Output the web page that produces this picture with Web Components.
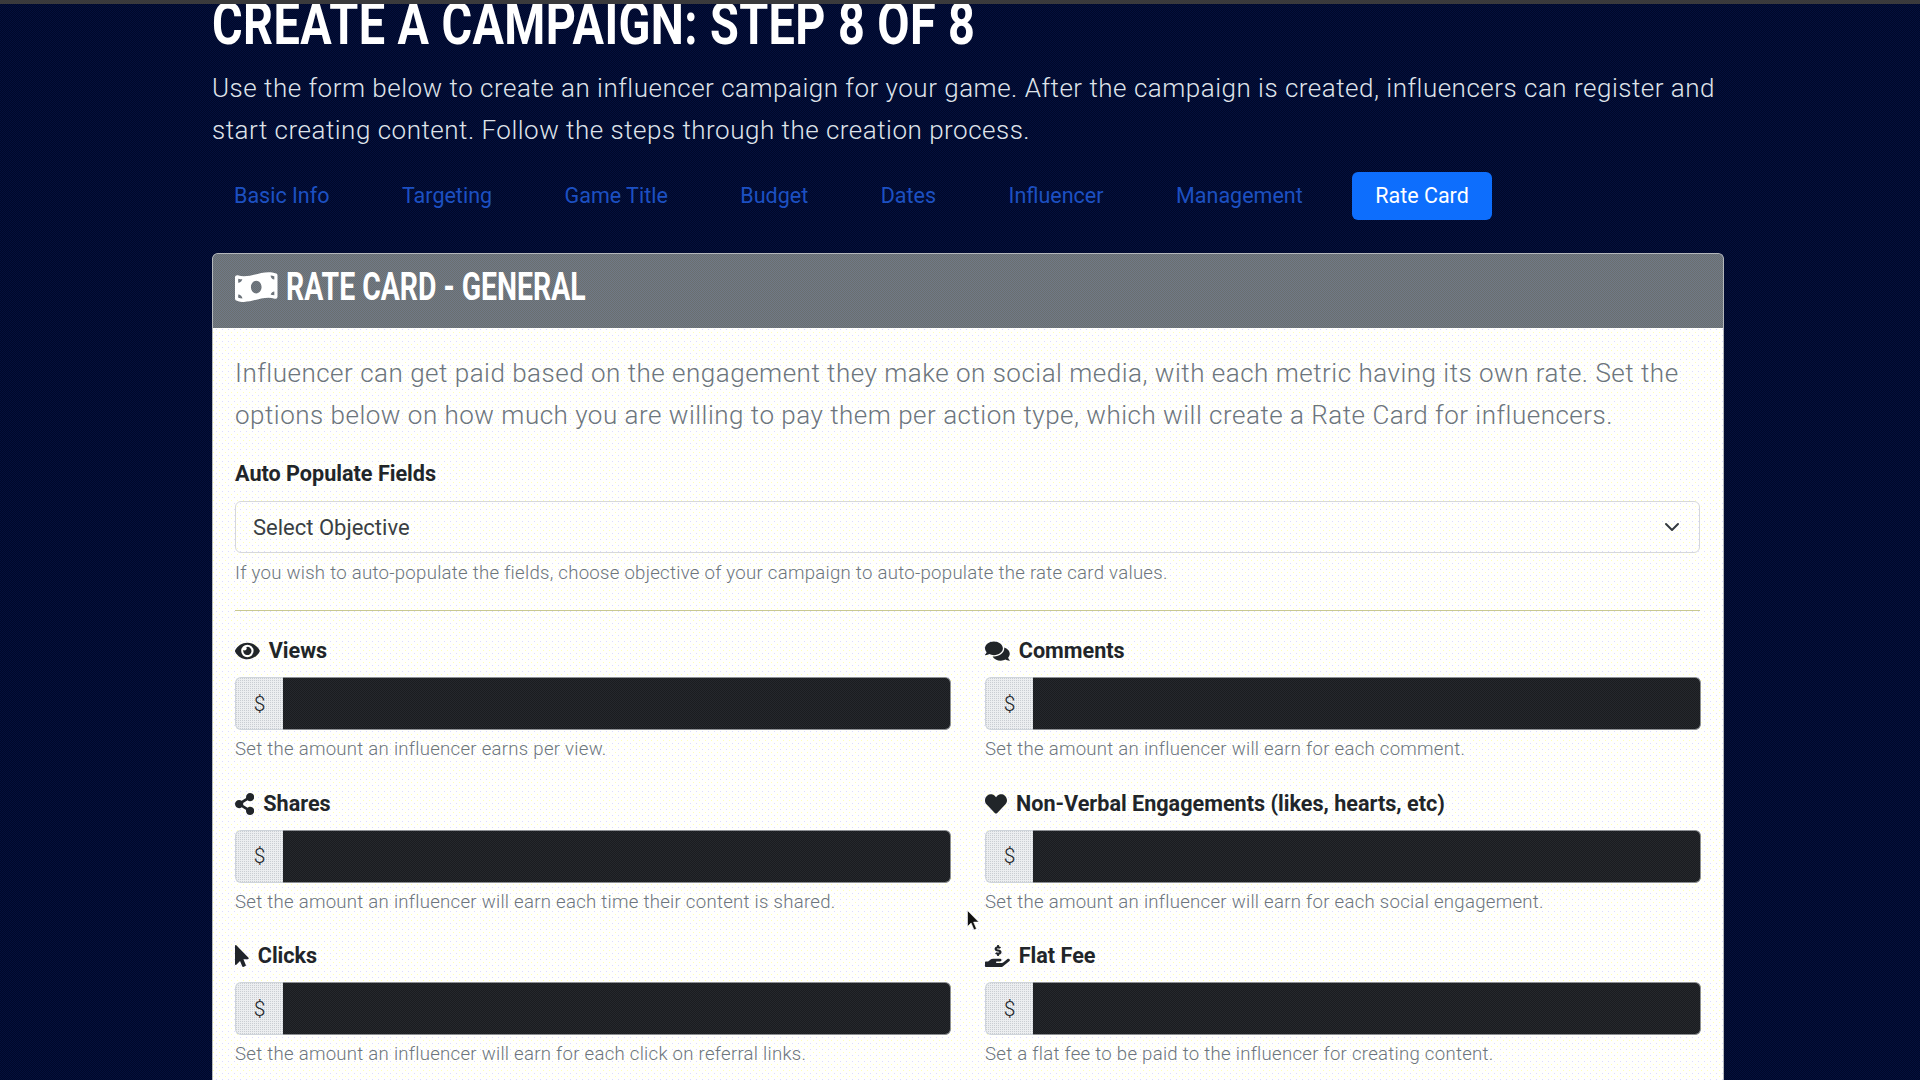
<!DOCTYPE html>
<html lang="en"><head><meta charset="utf-8"><title>Create a Campaign</title>
<style>
html,body{margin:0;height:1080px;overflow:hidden;background:#010a30}
body{font-family:Roboto,"Liberation Sans",sans-serif}
</style></head><body>
<campaign-page>
  <page-intro>
    <cond-title size="59" sx="0.794" lh="48" slot="t">CREATE A CAMPAIGN: STEP 8 OF 8</cond-title>
    Use the form below to create an influencer campaign for your game. After the campaign is created, influencers can register and start creating content. Follow the steps through the creation process.
  </page-intro>
  <step-tabs>
    <step-tab>Basic Info</step-tab><step-tab>Targeting</step-tab><step-tab>Game Title</step-tab><step-tab>Budget</step-tab><step-tab>Dates</step-tab><step-tab>Influencer</step-tab><step-tab>Management</step-tab><step-tab active>Rate Card</step-tab>
  </step-tabs>
  <rate-card>
    <fa-icon slot="icon" name="money" size="34" vb="640"></fa-icon>
    <cond-title slot="title" size="38" sx="0.747" lh="46">RATE CARD - GENERAL</cond-title>
    <select-field label="Auto Populate Fields" value="Select Objective" help="If you wish to auto-populate the fields, choose objective of your campaign to auto-populate the rate card values."></select-field>
    <rate-grid>
      <rate-field label="Views" icon="eye" help="Set the amount an influencer earns per view."></rate-field>
      <rate-field label="Comments" icon="comments" help="Set the amount an influencer will earn for each comment."></rate-field>
      <rate-field label="Shares" icon="share" help="Set the amount an influencer will earn each time their content is shared."></rate-field>
      <rate-field label="Non-Verbal Engagements (likes, hearts, etc)" icon="heart" help="Set the amount an influencer will earn for each social engagement."></rate-field>
      <rate-field label="Clicks" icon="pointer" help="Set the amount an influencer will earn for each click on referral links."></rate-field>
      <rate-field label="Flat Fee" icon="hand" help="Set a flat fee to be paid to the influencer for creating content."></rate-field>
    </rate-grid>
  </rate-card>
  <screen-cursor></screen-cursor>
</campaign-page>
<script>
const ICONS={
money:[640,"M621.16 54.46C582.37 38.19 543.55 32 504.75 32c-123.17-.01-246.33 62.34-369.5 62.34-30.89 0-61.76-3.92-92.65-13.72-3.47-1.1-6.95-1.62-10.35-1.62C15.04 79 0 92.32 0 110.81v317.26c0 12.63 7.23 24.6 18.84 29.46C57.63 473.81 96.45 480 135.25 480c123.17 0 246.34-62.35 369.51-62.35 30.89 0 61.76 3.92 92.65 13.72 3.47 1.1 6.95 1.62 10.35 1.62 17.21 0 32.25-13.32 32.25-31.81V83.93c-.01-12.64-7.24-24.6-18.85-29.47zM48 132.22c20.12 5.04 41.12 7.57 62.72 8.93C104.84 170.54 79 192.69 48 192.69v-60.47zm0 285v-47.78c34.37 0 62.18 27.27 63.71 61.4-22.53-1.81-43.59-6.31-63.71-13.62zM320 352c-44.19 0-80-42.99-80-96 0-53.02 35.82-96 80-96s80 42.98 80 96c0 53.03-35.83 96-80 96zm272 27.78c-17.52-4.39-35.71-6.85-54.32-8.44 5.87-26.08 27.5-45.88 54.32-49.28v57.72zm0-236.11c-30.89-3.91-54.86-29.7-55.81-61.55 19.54 2.17 38.09 6.23 55.81 12.66v48.89z"],
eye:[576,"M572.52 241.4C518.29 135.59 410.93 64 288 64S57.68 135.64 3.48 241.41a32.35 32.35 0 0 0 0 29.19C57.71 376.41 165.07 448 288 448s230.32-71.64 284.52-177.41a32.35 32.35 0 0 0 0-29.19zM288 400a144 144 0 1 1 144-144 143.93 143.93 0 0 1-144 144zm0-240a95.31 95.31 0 0 0-25.31 3.79 47.85 47.85 0 0 1-66.9 66.9A95.78 95.78 0 1 0 288 160z"],
comments:[576,"M416 192c0-88.4-93.1-160-208-160S0 103.6 0 192c0 34.3 14.1 65.9 38 92-13.4 30.2-35.5 54.2-35.8 54.5-2.2 2.3-2.8 5.7-1.5 8.7S4.8 352 8 352c36.6 0 66.9-12.3 88.7-25 32.2 15.7 70.3 25 111.3 25 114.9 0 208-71.6 208-160zm122 220c23.9-26 38-57.7 38-92 0-66.9-53.5-124.2-129.3-148.1.9 6.6 1.3 13.3 1.3 20.1 0 105.9-107.7 192-240 192-10.8 0-21.3-.8-31.7-1.9C207.8 439.6 281.8 480 368 480c41 0 79.1-9.2 111.3-25 21.8 12.7 52.1 25 88.7 25 3.2 0 6.1-1.9 7.3-4.8 1.3-2.9.7-6.3-1.5-8.7-.3-.3-22.4-24.2-35.8-54.5z"],
share:[448,"M352 320c-22.608 0-43.387 7.819-59.79 20.895l-102.486-64.054a96.551 96.551 0 0 0 0-41.683l102.486-64.054C308.613 184.181 329.392 192 352 192c53.019 0 96-42.981 96-96S405.019 0 352 0s-96 42.981-96 96c0 7.158.79 14.13 2.276 20.841L155.79 180.895C139.387 167.819 118.608 160 96 160c-53.019 0-96 42.981-96 96s42.981 96 96 96c22.608 0 43.387-7.819 59.79-20.895l102.486 64.054A96.301 96.301 0 0 0 256 416c0 53.019 42.981 96 96 96s96-42.981 96-96-42.981-96-96-96z"],
heart:[512,"M462.3 62.6C407.5 15.9 326 24.3 275.7 76.2L256 96.5l-19.7-20.3C186.1 24.3 104.5 15.9 49.7 62.6c-62.8 53.6-66.1 149.8-9.9 207.9l193.5 199.8c12.5 12.9 32.8 12.9 45.3 0l193.5-199.8c56.3-58.1 53-154.3-9.8-207.9z"],
pointer:[320,"M302.189 329.126H196.105l55.831 135.993c3.889 9.428-.555 19.999-9.444 23.999l-49.165 21.427c-9.165 4-19.443-.571-23.332-9.714l-53.053-129.136-86.664 89.138C18.729 472.71 0 463.554 0 447.977V18.299C0 1.899 19.921-6.096 30.277 5.443l284.412 292.542c11.472 11.179 3.007 31.141-12.5 31.141z"],
hand:[576,"M271.06,144.3l54.27,14.3a8.59,8.59,0,0,1,6.63,8.1c0,4.6-4.09,8.4-9.12,8.4h-35.6a30,30,0,0,1-11.19-2.2c-5.24-2.2-11.28-1.7-15.3,2l-19,17.5a11.68,11.68,0,0,0-2.25,2.66,11.42,11.42,0,0,0,3.88,15.74,83.77,83.77,0,0,0,34.51,11.5V240c0,8.8,7.83,16,17.37,16h17.37c9.55,0,17.38-7.2,17.38-16V221.9c32.93-3.6,57.84-31,53.5-63-3.15-23-22.46-41.3-46.56-47.7L282.68,97.4a8.59,8.59,0,0,1-6.63-8.1c0-4.6,4.09-8.4,9.12-8.4h35.6A30,30,0,0,1,332,83.1c5.23,2.2,11.28,1.7,15.3-2l19-17.5A11.31,11.31,0,0,0,368.47,61a11.43,11.43,0,0,0-3.84-15.78,83.82,83.82,0,0,0-34.52-11.5V16c0-8.8-7.82-16-17.37-16H295.37C285.82,0,278,7.2,278,16V34.1c-32.89,3.6-57.85,31-53.51,63C227.63,120.1,247,138.4,271.06,144.3ZM565.27,328.1c-11.8-10.7-30.2-10-42.6,0L430.27,402a63.64,63.64,0,0,1-40,14H272a16,16,0,0,1,0-32h78.29c15.9,0,30.71-10.9,33.25-26.6a31.2,31.2,0,0,0,.46-5.46A32,32,0,0,0,352,320H192a117.66,117.66,0,0,0-74.1,26.29L71.4,384H16A16,16,0,0,0,0,400v96a16,16,0,0,0,16,16H372.77a64,64,0,0,0,40-14L564,377a32,32,0,0,0,1.27-48.9Z"]
};
const DOTS=`background-color:#fffffd;background-image:radial-gradient(circle at .5px .5px,#ffffb8 .7px,transparent .8px),radial-gradient(circle at .5px .5px,#dcdcff .7px,transparent .8px);background-size:6px 6px;background-position:0 0,3px 3px;`;
const def=(n,html)=>customElements.define(n,class extends HTMLElement{
  constructor(){super();this.attachShadow({mode:'open'})}
  connectedCallback(){this.shadowRoot.innerHTML=typeof html==='function'?html(this):html}
});
def('fa-icon',e=>{const[w,d]=ICONS[e.getAttribute('name')],s=+e.getAttribute('size')||20;
 return `<style>:host{display:inline-flex;flex:none;line-height:0}svg{display:block;fill:currentColor}</style><svg width="${s*w/512}" height="${s}" viewBox="0 0 ${w} 512" aria-hidden="true"><path d="${d}"/></svg>`});
def('cond-title',e=>{const s=e.getAttribute('size'),x=e.getAttribute('sx'),l=e.getAttribute('lh');
 return `<style>:host{display:block;height:${l}px;white-space:nowrap;overflow:visible}span{display:inline-block;font:700 ${s}px/${l}px Roboto,"Liberation Sans",sans-serif;color:#fff;transform:scaleX(${x});transform-origin:0 50%}</style><span><slot></slot></span>`});
def('campaign-page',`<style>:host{display:block;height:1080px;box-sizing:border-box;padding:0 196px 0 212px;border-top:4px solid #3a3a3c;overflow:hidden;position:relative;
 background-color:#010a2e;background-image:repeating-conic-gradient(#000829 0 25%,#04103c 0 50%);background-size:2px 2px}</style><slot></slot>`);
def('page-intro',`<style>:host{display:block;color:#dfe3ea;font:300 26px/42px Roboto,"Liberation Sans",sans-serif;letter-spacing:.5px}
 .h{margin:-4px 0 18.5px}</style><div class="h"><slot name="t"></slot></div><slot></slot>`);
def('step-tabs',`<style>:host{display:flex;gap:26.5px;margin:21.5px 0 0 -1px;padding-bottom:33px}</style><slot></slot>`);
def('step-tab',e=>`<style>:host{display:block;height:48px;box-sizing:border-box;padding:0 23px;border-radius:6px;font:400 21.5px/48px Roboto,"Liberation Sans",sans-serif;color:${e.hasAttribute('active')?'#fff':'#1d50c2'};background:${e.hasAttribute('active')?'#0d6efd':'none'}}</style><slot></slot>`);
def('rate-card',`<style>:host{display:block;border:1px solid #b4b8bc;border-bottom:0;border-radius:6px 6px 0 0;overflow:hidden;height:840px;${DOTS}}
 header{display:flex;align-items:center;gap:8px;height:74px;box-sizing:border-box;padding:0 22px 9px;color:#fff;background-color:#6c757d;background-image:repeating-conic-gradient(#6a6e6e 0 25%,#707a88 0 50%);background-size:2px 2px}
 .b{padding:24px 23px 0 22px}
 p{margin:0 0 23px;font:300 26px/42px Roboto,"Liberation Sans",sans-serif;color:#6c757d;letter-spacing:.5px}</style>
 <header><slot name="icon"></slot><slot name="title"></slot></header>
 <div class="b"><p>Influencer can get paid based on the engagement they make on social media, with each metric having its own rate. Set the options below on how much you are willing to pay them per action type, which will create a Rate Card for influencers.</p><slot></slot></div>`);
def('select-field',e=>`<style>:host{display:block;font-family:Roboto,"Liberation Sans",sans-serif}
 label{display:block;font:700 21.6px/30px Roboto,"Liberation Sans",sans-serif;color:#212529;margin-bottom:12px}
 .s{display:flex;align-items:center;justify-content:space-between;height:52px;box-sizing:border-box;padding:0 19px 0 17px;border:1px solid #d6d8da;border-radius:6px;font-size:22px;color:#3a3f44}
 svg{display:block}small{display:block;font:300 18.6px/30px Roboto,"Liberation Sans",sans-serif;color:#6c757d;margin-top:5px;letter-spacing:.27px}
 hr{border:0;border-top:1px solid #c8c890;margin:21.5px 0 25.5px}</style>
 <label>${e.getAttribute('label')}</label><div class="s"><span>${e.getAttribute('value')}</span><svg width="16" height="16" viewBox="0 0 16 16" fill="none" stroke="#343a40" stroke-width="2" stroke-linecap="round" stroke-linejoin="round"><path d="m2 5 6 6 6-6"/></svg></div><small>${e.getAttribute('help')}</small><hr>`);
def('rate-grid',`<style>:host{display:grid;grid-template-columns:716px 716px;column-gap:34px;row-gap:24.5px}</style><slot></slot>`);
const IS={eye:22,comments:22,share:22,heart:22,pointer:22,hand:22};
def('rate-field',e=>{const ic=e.getAttribute('icon');return `<style>:host{display:block}
 .l{display:flex;align-items:center;gap:9px;height:30px;margin-bottom:11px;font:700 21.6px/30px Roboto,"Liberation Sans",sans-serif;color:#212529}
 .g{display:flex;height:53px;box-sizing:border-box}
 .a{width:48px;flex:none;box-sizing:border-box;display:flex;align-items:center;justify-content:center;font:300 21px Roboto,"Liberation Sans",sans-serif;color:#212529;border:1px solid #ced4da;border-right:0;border-radius:6px 0 0 6px;background-color:#eceef0;background-image:radial-gradient(circle at .5px .5px,#c9cdd2 .6px,transparent .7px);background-size:2px 2px}
 .i{flex:1;border:1px solid #8d9094;border-left:0;border-radius:0 6px 6px 0;background-color:#1f2226;background-image:repeating-conic-gradient(#1a1c1f 0 25%,#25282d 0 50%);background-size:2px 2px}
 small{display:block;font:300 18.6px/30px Roboto,"Liberation Sans",sans-serif;color:#6c757d;margin-top:4px;letter-spacing:.27px}</style>
 <div class="l"><fa-icon name="${ic}" size="${IS[ic]}"></fa-icon><span>${e.getAttribute('label')}</span></div><div class="g"><div class="a">$</div><div class="i"></div></div><small>${e.getAttribute('help')}</small>`});
def('screen-cursor',`<style>:host{position:absolute;left:967px;top:906px;width:12px;height:21px;line-height:0}</style><svg width="12" height="21" viewBox="0 0 12 21"><path d="M.5.5v16l3.6-3.5 2.9 6.9 2.5-1.1-2.9-6.7h5.2z" fill="#111" stroke="#fff" stroke-width=".6"/></svg>`);
</script>
</body></html>
